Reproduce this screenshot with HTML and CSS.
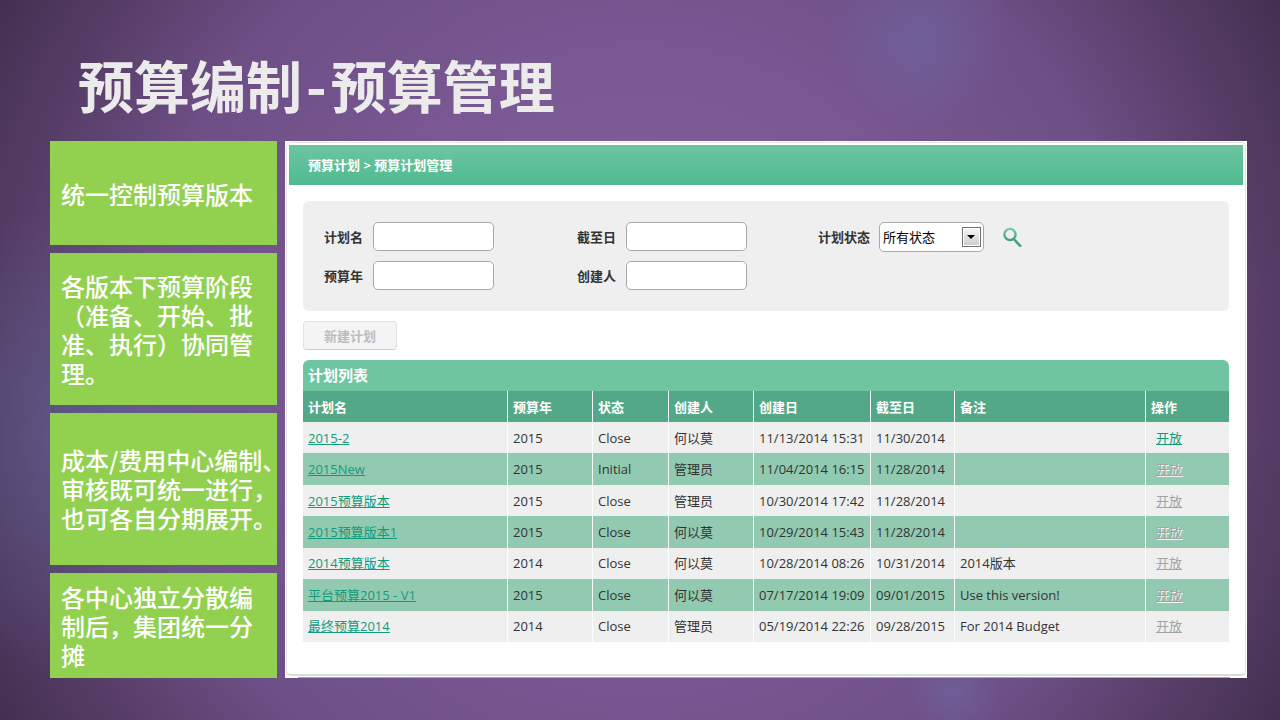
FILE: index.html
```html
<!DOCTYPE html>
<html lang="zh-CN">
<head>
<meta charset="utf-8">
<meta name="viewport" content="width=device-width, initial-scale=1">
<title>预算编制-预算管理</title>
<link rel="stylesheet" href="styles.css">
</head>
<body>
<main class="slide">
  <h1 class="slide-title">预算编制<span class="dash">-</span>预算管理</h1>
  <div class="slide-body">
    <section class="points">
      <p class="point">统一控制预算版本</p>
      <p class="point">各版本下预算阶段<br>（准备、开始、批<br>准、执行）协同管<br>理。</p>
      <p class="point">成本/费用中心编制、<br>审核既可统一进行，<br>也可各自分期展开。</p>
      <p class="point">各中心独立分散编<br>制后，集团统一分<br>摊</p>
    </section>
    <section class="shot">
      <div class="app">
        <header class="crumbs">预算计划 &gt; 预算计划管理</header>
        <div class="content">
          <form class="filter">
            <label class="lbl" for="plan">计划名</label>
            <input class="field" id="plan" type="text">
            <label class="lbl" for="due">截至日</label>
            <input class="field" id="due" type="text">
            <label class="lbl" for="state">计划状态</label>
            <span class="select-wrap">
              <select class="select" id="state"><option>所有状态</option></select>
              <svg class="drop" viewBox="0 0 19 20" aria-hidden="true"><defs><linearGradient id="face" x1="0" y1="0" x2="0" y2="1"><stop offset="0" stop-color="#f6f6f6"/><stop offset="1" stop-color="#cdcdcd"/></linearGradient></defs><rect x=".5" y=".5" width="18" height="19" fill="#fff" stroke="#707070"/><rect x="2" y="2" width="15" height="16" fill="url(#face)"/><path d="M5 8h8l-4 4z" fill="#000"/></svg>
            </span>
            <button class="search" type="button" aria-label="查询">
              <svg viewBox="0 0 20 20" aria-hidden="true"><defs><linearGradient id="lens" x1="0" y1="0" x2="0" y2="1"><stop offset="0" stop-color="#7fc6aa"/><stop offset="1" stop-color="#3f9f7c"/></linearGradient></defs><circle cx="7" cy="7.5" r="5.6" fill="none" stroke="url(#lens)" stroke-width="2.4"/><path d="M11.8 13.2l5.4 5.6" fill="none" stroke="#46a180" stroke-width="2.6" stroke-linecap="round"/></svg>
            </button>
            <label class="lbl row2" for="year">预算年</label>
            <input class="field" id="year" type="text">
            <label class="lbl" for="owner">创建人</label>
            <input class="field" id="owner" type="text">
          </form>
          <button class="new-plan" type="button" disabled>新建计划</button>
          <h2 class="list-title">计划列表</h2>
          <table class="plans">
            <colgroup><col class="c-name"><col class="c-year"><col class="c-state"><col class="c-owner"><col class="c-created"><col class="c-due"><col><col class="c-act"></colgroup>
            <thead><tr><th>计划名</th><th>预算年</th><th>状态</th><th>创建人</th><th>创建日</th><th>截至日</th><th>备注</th><th>操作</th></tr></thead>
            <tbody>
              <tr><td><a href="#">2015-2</a></td><td>2015</td><td>Close</td><td>何以莫</td><td>11/13/2014 15:31</td><td>11/30/2014</td><td></td><td><a href="#">开放</a></td></tr>
              <tr><td><a href="#">2015New</a></td><td>2015</td><td>Initial</td><td>管理员</td><td>11/04/2014 16:15</td><td>11/28/2014</td><td></td><td><a class="off" href="#">开放</a></td></tr>
              <tr><td><a href="#">2015预算版本</a></td><td>2015</td><td>Close</td><td>管理员</td><td>10/30/2014 17:42</td><td>11/28/2014</td><td></td><td><a class="off" href="#">开放</a></td></tr>
              <tr><td><a href="#">2015预算版本1</a></td><td>2015</td><td>Close</td><td>何以莫</td><td>10/29/2014 15:43</td><td>11/28/2014</td><td></td><td><a class="off" href="#">开放</a></td></tr>
              <tr><td><a href="#">2014预算版本</a></td><td>2014</td><td>Close</td><td>何以莫</td><td>10/28/2014 08:26</td><td>10/31/2014</td><td>2014版本</td><td><a class="off" href="#">开放</a></td></tr>
              <tr><td><a href="#">平台预算2015 - V1</a></td><td>2015</td><td>Close</td><td>何以莫</td><td>07/17/2014 19:09</td><td>09/01/2015</td><td>Use this version!</td><td><a class="off" href="#">开放</a></td></tr>
              <tr><td><a href="#">最终预算2014</a></td><td>2014</td><td>Close</td><td>管理员</td><td>05/19/2014 22:26</td><td>09/28/2015</td><td>For 2014 Budget</td><td><a class="off" href="#">开放</a></td></tr>
            </tbody>
          </table>
        </div>
      </div>
      <div class="sliver"></div>
    </section>
  </div>
</main>
</body>
</html>
```

FILE: styles.css
```css
* { box-sizing: border-box; }

body {
  margin: 0;
  font-family: "Open Sans", "Noto Sans CJK SC", sans-serif;
  font-size: 13px;
  line-height: 18px;
  color: #333;
}

.slide {
  min-height: 100vh;
  padding: 44px 33px 42px 50px;
  background:
    radial-gradient(circle 90px at 922px 36px, rgba(108, 108, 165, .5), transparent),
    radial-gradient(circle 48px at 955px 692px, rgba(108, 108, 165, .5), transparent),
    radial-gradient(circle 240px at 90px 440px, rgba(90, 108, 155, .5), transparent),
    radial-gradient(ellipse 740px 740px at 50% 50%, #8460a0 0%, #7c5a96 35%, #6d4e85 68%, #553c64 86%, #432f50 100%);
}

.slide-title {
  margin: 0 0 17px;
  padding-left: 28px;
  font-family: "Noto Sans CJK SC", sans-serif;
  font-size: 56px;
  font-weight: 700;
  line-height: 80px;
  color: #ebebeb;
}

.dash { padding: 0 4px; }

.slide-body {
  display: grid;
  grid-template-columns: 227px minmax(0, 1fr);
  gap: 8px;
}

.points {
  display: grid;
  grid-template-columns: minmax(0, 1fr);
  grid-template-rows: 104fr 151fr 151fr 105fr;
  gap: 8px;
}

.point {
  display: grid;
  align-content: center;
  margin: 0;
  padding-left: 11px;
  background: #92d14f;
  color: #fff;
  font-family: "Noto Sans CJK SC", sans-serif;
  font-size: 24px;
  font-weight: 500;
  line-height: 29px;
  white-space: nowrap;
}

.shot {
  padding: 1px 1px 0;
  background: #fff;
}

.app {
  padding: 2px;
  border: 1px solid #e3e3e3;
  border-bottom: 2px solid #d8dcda;
  border-radius: 5px;
}

.sliver {
  height: 1px;
  margin: 1px 16px 0 12px;
  background: #83bda3;
}

.crumbs {
  padding: 11px 19px;
  background: linear-gradient(#6dc5a0, #4fba90);
  color: #fff;
  font-weight: 700;
}

.content { padding: 16px 14px 30px; }

.filter {
  display: grid;
  grid-template-columns: 49px 204px 49px 192px 61px 124px 20px;
  row-gap: 10px;
  align-items: center;
  padding: 21px 21px;
  border-radius: 6px;
  background: #efefef;
}

.lbl { font-weight: 700; }
.row2 { grid-column: 1; }

.field {
  width: 121px;
  height: 29px;
  padding: 0 6px;
  border: 1px solid #a9a9a9;
  border-radius: 5px;
  background: #fff;
  font: inherit;
}

.select-wrap {
  position: relative;
  width: 105px;
  height: 29px;
}

.select {
  appearance: none;
  width: 100%;
  height: 30px;
  padding: 0 24px 0 3px;
  border: 1px solid #a9a9a9;
  border-radius: 5px;
  background: #fff;
  color: #000;
  font: inherit;
}

.drop {
  position: absolute;
  top: 5px;
  right: 3px;
  width: 19px;
  height: 20px;
  pointer-events: none;
}

.search {
  width: 20px;
  height: 20px;
  padding: 0;
  border: 0;
  background: none;
}

.search svg { display: block; }

.new-plan {
  display: block;
  margin: 10px 0;
  padding: 5px 20px 4px;
  border: 1px solid #e2e2e2;
  border-bottom-color: #cfcfcf;
  border-radius: 4px;
  background: #f4f4f4;
  color: #bdbdbd;
  font: inherit;
  font-weight: 700;
}

.list-title {
  margin: 0;
  padding: 6px 5px 7px;
  border-radius: 6px 6px 0 0;
  background: #6fc5a0;
  color: #fff;
  font-size: 15px;
  line-height: 18px;
}

.plans {
  width: 100%;
  height: 251px;
  table-layout: fixed;
  border-collapse: separate;
  border-spacing: 0;
}

.c-name { width: 205px; }
.c-year { width: 85px; }
.c-state { width: 76px; }
.c-owner { width: 85px; }
.c-created { width: 117px; }
.c-due { width: 84px; }
.c-act { width: 83px; }

.plans th,
.plans td {
  height: 31px;
  padding: 0 0 0 5px;
  border-right: 1px solid #f8fffc;
  text-align: left;
  white-space: nowrap;
}

.plans th:last-child,
.plans td:last-child { border-right: 0; }

.plans th {
  background: #53a987;
  color: #fff;
}

.plans td { background: #efefef; }
.plans tr:nth-child(even) td { background: #92cab1; }
.plans td:last-child { padding-left: 10px; }

.plans a { color: #129a7a; }
.plans .off { color: #a3a3a3; }
.plans tr:nth-child(even) .off { text-shadow: 1px 1px 0 #f4f4f4; }
```
